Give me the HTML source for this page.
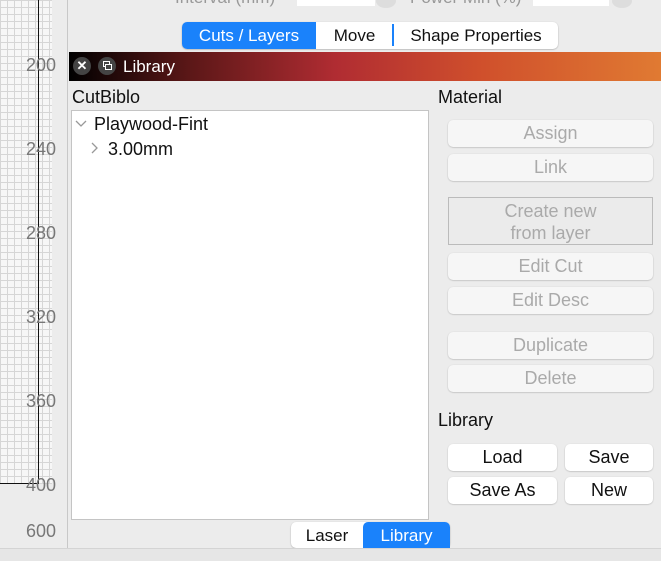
<!DOCTYPE html>
<html><head><style>
*{box-sizing:border-box;margin:0;padding:0}
body{width:661px;height:561px;background:#ececec;font-family:"Liberation Sans",sans-serif;position:relative;overflow:hidden;font-size:16px}
.a{position:absolute}
.grid{left:0;top:0;width:52px;height:484px;background-color:#f7f7f7;background-image:linear-gradient(#d6d6d6 1px,transparent 1px),linear-gradient(90deg,#d6d6d6 1px,transparent 1px);background-size:7px 7px}
.num{color:#777;font-size:18px;left:26px}
.btn{position:absolute;background:#f6f6f6;border-radius:5px;box-shadow:0 0.5px 1.5px rgba(0,0,0,.25);text-align:center;color:#aaa;font-size:18px;line-height:27px}
.en{background:#fff;color:#111}
.tab{position:absolute;text-align:center;font-size:17px;line-height:27px}
</style></head><body>
<div class="a grid"></div>
<div class="a" style="left:38px;top:0;width:1px;height:484px;background:#111"></div>
<div class="a" style="left:0;top:483px;width:39px;height:1px;background:#111"></div>
<div class="a" style="left:67px;top:0;width:1px;height:548px;background:#c8c8c8"></div>
<div class="a num" style="top:55px">200</div>
<div class="a num" style="top:139px">240</div>
<div class="a num" style="top:223px">280</div>
<div class="a num" style="top:307px">320</div>
<div class="a num" style="top:391px">360</div>
<div class="a num" style="top:475px">400</div>
<div class="a num" style="top:521px">600</div>
<div class="a" style="left:175px;top:-12px;color:#999;font-size:17px">Interval (mm)</div>
<div class="a" style="left:297px;top:-8px;width:78px;height:14px;background:#fff"></div>
<div class="a" style="left:376px;top:-6px;width:20px;height:14px;border-radius:50%;background:#ddd"></div>
<div class="a" style="left:410px;top:-12px;color:#999;font-size:17px">Power Min (%)</div>
<div class="a" style="left:533px;top:-8px;width:76px;height:14px;background:#fff"></div>
<div class="a" style="left:612px;top:-6px;width:20px;height:14px;border-radius:50%;background:#ddd"></div>
<div class="a" style="left:182px;top:22px;width:376px;height:27px;background:#fff;border-radius:5px;box-shadow:0 0.5px 1.5px rgba(0,0,0,.3)"></div>
<div class="tab" style="left:182px;top:22px;width:134px;background:#1a82fb;color:#fff;border-radius:5px 0 0 5px">Cuts / Layers</div>
<div class="tab" style="left:316px;top:22px;width:77px;color:#111">Move</div>
<div class="a" style="left:392px;top:24px;width:2px;height:22px;background:#1a82fb"></div>
<div class="tab" style="left:394px;top:22px;width:164px;color:#111">Shape Properties</div>
<div class="a" style="left:69px;top:52px;width:592px;height:29px;background:linear-gradient(90deg,#000 0%,#5a1717 20%,#b02c32 45%,#d0502c 70%,#e07a32 100%)"></div>
<div class="a" style="left:73px;top:57px;width:18px;height:18px;border-radius:50%;background:#444;color:#fff;font-size:13px;text-align:center;line-height:18px;font-weight:bold">✕</div>
<div class="a" style="left:98px;top:57px;width:18px;height:18px;border-radius:50%;background:#444"></div>
<div class="a" style="left:103px;top:61px;width:7px;height:6px;border:1px solid #fff"></div>
<div class="a" style="left:105px;top:64px;width:7px;height:6px;border:1px solid #fff;background:#444"></div>
<div class="a" style="left:123px;top:57px;color:#fff;font-size:17px">Library</div>
<div class="a" style="left:72px;top:87px;font-size:18px;color:#111">CutBiblo</div>
<div class="a" style="left:438px;top:87px;font-size:18px;color:#111">Material</div>
<div class="a" style="left:71px;top:110px;width:358px;height:410px;background:#fff;border:1px solid #c4c4c4"></div>
<svg class="a" style="left:74px;top:118px" width="14" height="10"><path d="M2 3 L7 8 L12 3" fill="none" stroke="#999" stroke-width="1.3"/></svg>
<div class="a" style="left:94px;top:114px;font-size:18px;color:#111">Playwood-Fint</div>
<svg class="a" style="left:89px;top:141px" width="10" height="14"><path d="M3 2 L8 7 L3 12" fill="none" stroke="#999" stroke-width="1.3"/></svg>
<div class="a" style="left:108px;top:139px;font-size:18px;color:#111">3.00mm</div>
<div class="btn" style="left:448px;top:120px;width:205px">Assign</div>
<div class="btn" style="left:448px;top:154px;width:205px">Link</div>
<div class="a" style="left:448px;top:197px;width:205px;height:48px;border:1px solid #bbb;background:#ebebeb;color:#aaa;font-size:18px;text-align:center;line-height:22px;padding-top:2px">Create new<br>from layer</div>
<div class="btn" style="left:448px;top:253px;width:205px">Edit Cut</div>
<div class="btn" style="left:448px;top:287px;width:205px">Edit Desc</div>
<div class="btn" style="left:448px;top:332px;width:205px">Duplicate</div>
<div class="btn" style="left:448px;top:365px;width:205px">Delete</div>
<div class="a" style="left:438px;top:410px;font-size:18px;color:#111">Library</div>
<div class="btn en" style="left:448px;top:444px;width:109px">Load</div>
<div class="btn en" style="left:565px;top:444px;width:88px">Save</div>
<div class="btn en" style="left:448px;top:477px;width:109px">Save As</div>
<div class="btn en" style="left:565px;top:477px;width:88px">New</div>
<div class="a" style="left:291px;top:522px;width:159px;height:26px;background:#fff;border-radius:5px;box-shadow:0 0.5px 1.5px rgba(0,0,0,.3)"></div>
<div class="tab" style="left:291px;top:522px;width:72px;color:#111">Laser</div>
<div class="tab" style="left:363px;top:522px;width:87px;background:#1a82fb;color:#fff;border-radius:5px 5px 0 0">Library</div>
<div class="a" style="left:0;top:548px;width:661px;height:13px;background:#e6e6e6;border-top:1px solid #d4d4d4"></div>
</body></html>
